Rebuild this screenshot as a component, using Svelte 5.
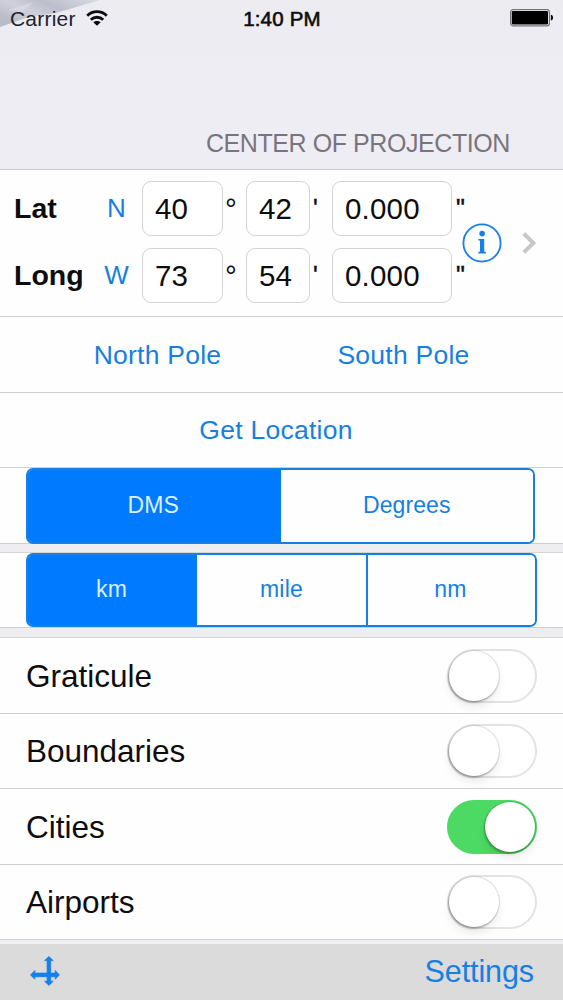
<script lang="ts">
	type Coordinate = { label: string; hemisphere: string; deg: string; min: string; sec: string };

	let coordinates = $state<Coordinate[]>([
		{ label: 'Lat', hemisphere: 'N', deg: '40', min: '42', sec: '0.000' },
		{ label: 'Long', hemisphere: 'W', deg: '73', min: '54', sec: '0.000' }
	]);

	const formats = ['DMS', 'Degrees'];
	const units = ['km', 'mile', 'nm'];
	let format = $state('DMS');
	let unit = $state('km');

	let layers = $state([
		{ name: 'Graticule', on: false },
		{ name: 'Boundaries', on: false },
		{ name: 'Cities', on: true },
		{ name: 'Airports', on: false }
	]);

	const opposite: Record<string, string> = { N: 'S', S: 'N', E: 'W', W: 'E' };

	function setPole(hemisphere: string) {
		coordinates[0] = { label: 'Lat', hemisphere, deg: '90', min: '0', sec: '0.000' };
	}
</script>

<main class="screen">
	<header>
		<svg class="ice" viewBox="0 0 104 28" aria-hidden="true">
			<defs>
				<linearGradient id="ice" x1="0" y1="0.6" x2="1" y2="0">
					<stop offset="0" stop-color="#b9bbc7" />
					<stop offset="0.3" stop-color="#cfd0db" />
					<stop offset="0.55" stop-color="#bcbecb" />
					<stop offset="1" stop-color="#d9dae4" />
				</linearGradient>
			</defs>
			<path d="M0 0H100L56 13L26 18L0 27Z" fill="url(#ice)" />
			<path d="M8 10L34 2L22 12Z" fill="#dcdde6" opacity="0.6" />
		</svg>
		<div class="status">
			<span class="carrier">
				Carrier
				<svg width="22" height="16" viewBox="0 0 22 16" aria-label="Wi-Fi">
					<g fill="none" stroke="#0b0c12" stroke-width="2.8">
						<path d="M1.2 5.7C6.7 0.3 15.3 0.3 20.8 5.7" />
						<path d="M4.8 9.8C8.4 6.4 13.6 6.4 17.2 9.8" />
					</g>
					<path d="M11 15.8L7.3 12.3C9.4 10.5 12.6 10.5 14.7 12.3Z" fill="#0b0c12" />
				</svg>
			</span>
			<span class="time">1:40 PM</span>
			<svg class="battery" width="44" height="18" viewBox="0 0 44 18" aria-label="Battery full">
				<rect x="0.6" y="0.6" width="38.8" height="16.2" rx="2.6" fill="#f4f3f7" stroke="#77757b" stroke-width="1.2" />
				<rect x="1.8" y="2" width="36.2" height="13.4" rx="1.2" fill="#000" />
				<path d="M40.8 5.8C43.9 6.2 43.9 11.2 40.8 11.6Z" fill="#111" />
			</svg>
		</div>
		<h1>CENTER OF PROJECTION</h1>
	</header>

	<section class="center">
		<div class="coordinates">
			{#each coordinates as row}
				<div class="coordinate">
					<strong>{row.label}</strong>
					<button class="hemisphere" onclick={() => (row.hemisphere = opposite[row.hemisphere])}>
						{row.hemisphere}
					</button>
					<input bind:value={row.deg} aria-label="{row.label} degrees" />
					<span class="unit degree">°</span>
					<input bind:value={row.min} aria-label="{row.label} minutes" />
					<span class="unit minute">'</span>
					<input bind:value={row.sec} aria-label="{row.label} seconds" />
					<span class="unit second">"</span>
				</div>
			{/each}
		</div>
		<button class="info" aria-label="Info">
			<svg width="40" height="40" viewBox="0 0 40 40">
				<circle cx="20" cy="20" r="18.6" fill="none" stroke="#167fe8" stroke-width="1.8" />
				<circle cx="20.1" cy="10.6" r="2.8" fill="#167fe8" />
				<path d="M16.3 16H22.2V28.6L24 29.2V30.6H16.2V29.2L18 28.6V17.8L16.3 17.3Z" fill="#167fe8" />
			</svg>
		</button>
		<svg class="chevron" width="15" height="22" viewBox="0 0 15 22" aria-hidden="true">
			<path d="M1.8 1.6L11.4 11L1.8 20.4" fill="none" stroke="#c7c7cb" stroke-width="4" />
		</svg>
	</section>

	<section class="row poles">
		<button onclick={() => setPole('N')}>North Pole</button>
		<button onclick={() => setPole('S')}>South Pole</button>
	</section>

	<section class="row location">
		<button>Get Location</button>
	</section>

	<section class="row format">
		<div class="segments">
			{#each formats as item}
				<button class:active={format === item} onclick={() => (format = item)}>{item}</button>
			{/each}
		</div>
	</section>
	<div class="gap"></div>
	<section class="row units">
		<div class="segments">
			{#each units as item}
				<button class:active={unit === item} onclick={() => (unit = item)}>{item}</button>
			{/each}
		</div>
	</section>
	<div class="gap wide"></div>

	<section class="layers">
		{#each layers as layer}
			<div class="layer">
				<span>{layer.name}</span>
				<button
					class="switch"
					class:on={layer.on}
					role="switch"
					aria-checked={layer.on}
					aria-label={layer.name}
					onclick={() => (layer.on = !layer.on)}
				>
					<span class="knob"></span>
				</button>
			</div>
		{/each}
	</section>

	<footer>
		<button aria-label="Move">
			<svg width="30" height="30" viewBox="0 0 30 30">
				<g fill="#167fe8" stroke="#167fe8" stroke-width="0.8" stroke-linejoin="round">
					<path d="M18.9 0.5L23.2 4.6H20.7V25.2H23.2L18.9 29.4L14.6 25.2H17.1V4.6H14.6Z" />
					<path d="M0.5 18.9L4.8 14.6V17.1H25.2V14.6L29.5 18.9L25.2 23.2V20.7H4.8V23.2Z" />
				</g>
			</svg>
		</button>
		<button class="settings">Settings</button>
	</footer>
</main>

<style>
	:global(body) {
		margin: 0;
		font-family: 'Liberation Sans', Arial, Helvetica, sans-serif;
		color: #0d0d0f;
		background: #efeff4;
	}

	.screen {
		width: 563px;
		height: 1000px;
		overflow: hidden;
		display: flex;
		flex-direction: column;
	}

	button {
		padding: 0;
		border: 0;
		background: none;
		font: inherit;
		color: #167fe2;
		letter-spacing: inherit;
		cursor: pointer;
	}

	svg {
		display: block;
	}

	header {
		box-sizing: border-box;
		height: 170px;
		flex: none;
		position: relative;
		display: flex;
		flex-direction: column;
		justify-content: space-between;
		background: linear-gradient(#ebebf0, #efedf4 60px);
		border-bottom: 1px solid #cbcacd;
	}

	.ice {
		position: absolute;
		top: 0;
		left: 0;
		width: 104px;
		height: 28px;
	}

	.status {
		position: relative;
		display: grid;
		grid-template-columns: 1fr auto 1fr;
		align-items: center;
		height: 36px;
		padding: 0 9px 0 10px;
		font-size: 20.5px;
	}

	.carrier {
		display: flex;
		align-items: center;
		gap: 10px;
		padding-top: 1px;
		font-size: 21px;
		letter-spacing: 0.2px;
		color: #20222c;
	}

	.carrier svg {
		margin-bottom: 2px;
	}

	.time {
		padding-top: 1px;
		letter-spacing: 0.2px;
		-webkit-text-stroke: 0.6px #0d0d0f;
	}

	.battery {
		justify-self: end;
	}

	h1 {
		margin: 0;
		padding: 0 53px 11px 0;
		text-align: right;
		font-size: 25px;
		line-height: 29px;
		font-weight: 400;
		letter-spacing: -0.42px;
		color: #77757c;
	}

	.center {
		box-sizing: border-box;
		height: 147px;
		flex: none;
		display: flex;
		align-items: center;
		background: #fefefe;
		border-bottom: 1px solid #cbcbcd;
	}

	.coordinates {
		display: grid;
		gap: 12px;
		padding-left: 14px;
		margin-top: -2px;
	}

	.coordinate {
		display: grid;
		grid-template-columns: 84px 44px 81px 23px 64px 22px 120px 10px;
		align-items: center;
		font-size: 29.5px;
	}

	.coordinate strong {
		font-size: 28.5px;
	}

	.hemisphere {
		padding-right: 7px;
		font-size: 26px;
	}

	input {
		box-sizing: border-box;
		width: 100%;
		height: 55px;
		padding: 0 0 0 12px;
		border: 1px solid #d3d3d5;
		border-radius: 9px;
		background: #fff;
		font: inherit;
		letter-spacing: 0.2px;
		color: inherit;
	}

	.unit {
		line-height: 55px;
	}

	.degree {
		padding-left: 2px;
	}

	.minute {
		padding-left: 3px;
		font-size: 25px;
		-webkit-text-stroke: 0.4px #0d0d0f;
	}

	.second {
		padding-left: 4px;
		font-size: 25px;
		-webkit-text-stroke: 0.4px #0d0d0f;
	}

	.info {
		flex: none;
	}

	.chevron {
		margin-left: 20px;
	}

	.row {
		box-sizing: border-box;
		height: 76px;
		flex: none;
		background: #fefefe;
		border-bottom: 1px solid #cfcfd1;
		font-size: 26.5px;
		letter-spacing: 0.25px;
	}

	.poles {
		display: grid;
		grid-template-columns: 246px 246px;
		justify-content: center;
		padding-right: 2px;
	}

	.poles button,
	.location button {
		padding-top: 1px;
	}

	.location {
		height: 75px;
		display: grid;
		padding-right: 11px;
	}

	.format {
		padding: 0 28px 0 26px;
	}

	.units {
		height: 75px;
		padding: 0 26px;
	}

	.segments {
		box-sizing: border-box;
		height: 76px;
		position: relative;
		display: grid;
		grid-auto-flow: column;
		grid-auto-columns: 1fr;
		overflow: hidden;
		border: 2px solid #167fe2;
		border-radius: 7px;
		background: #fefefe;
		font-size: 23px;
		letter-spacing: 0.1px;
	}

	.units .segments {
		height: 74px;
		letter-spacing: 0.2px;
	}

	.segments button {
		padding: 0 2px 2px 0;
		background: #fefefe;
	}

	.segments button + button {
		border-left: 2px solid #167fe2;
	}

	.segments .active {
		background: #007aff;
		box-shadow: 0 0 0 2px #007aff;
		color: #d9f0ff;
	}

	.segments .active + button {
		border-left-color: transparent;
	}

	.gap {
		box-sizing: border-box;
		height: 9px;
		flex: none;
		background: #eeeef1;
		border-bottom: 1px solid #d5d5d8;
	}

	.gap.wide {
		height: 10px;
	}

	.layers {
		height: 302px;
		flex: none;
		display: grid;
		grid-template-rows: repeat(4, 1fr);
	}

	.layer {
		display: flex;
		align-items: center;
		justify-content: space-between;
		padding: 1px 26px 0;
		background: #fefefe;
		border-bottom: 1px solid #cfcfd1;
		font-size: 31.5px;
	}

	.layer > span {
		padding-top: 1px;
	}

	.switch {
		box-sizing: border-box;
		width: 90px;
		height: 54px;
		border: 2px solid #e3e2e5;
		border-radius: 27px;
		background: #fff;
		display: flex;
		align-items: center;
	}

	.knob {
		width: 50px;
		height: 50px;
		border-radius: 50%;
		background: #fff;
		box-shadow: 0 0 1px 1px rgba(0, 0, 0, 0.12), -1px 2px 2px rgba(0, 0, 0, 0.22), 0 6px 10px rgba(0, 0, 0, 0.08);
	}

	.switch.on {
		justify-content: flex-end;
		background: #4cd964;
		border-color: #4cd964;
	}

	footer {
		box-sizing: border-box;
		flex: 1;
		margin-top: 4px;
		display: flex;
		align-items: center;
		justify-content: space-between;
		padding: 0 29px 2px 30px;
		background: #dbdbdc;
	}

	.settings {
		font-size: 30.5px;
		letter-spacing: -0.1px;
	}
</style>
